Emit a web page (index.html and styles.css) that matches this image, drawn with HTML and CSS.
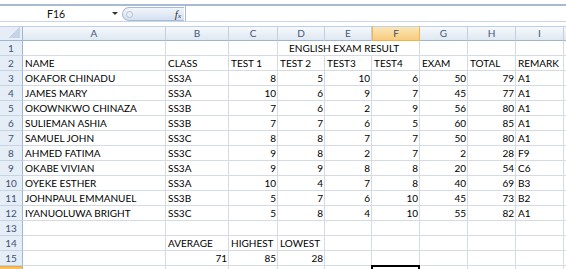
FILE: index.html
```html
<!DOCTYPE html>
<html>
<head>
<meta charset="utf-8">
<link rel="stylesheet" href="styles.css">
</head>
<body>
<div class="fbar">
  <div class="namebox"><span class="nb-text">F16</span><span class="nb-arrow"></span></div>
  <div class="fbtns"><span class="fb-circle"></span><span class="fx">f<span class="fx-sub">x</span></span></div>
  <div class="finput"></div>
</div>
<div class="gap"></div>
<div class="sheet">
  <div class="corner"></div><div class="ch">A</div><div class="ch">B</div><div class="ch">C</div><div class="ch">D</div><div class="ch">E</div><div class="ch ch-sel">F</div><div class="ch">G</div><div class="ch">H</div><div class="ch">I</div><div class="ch ch-last"></div>

  <div class="rh">1</div><div class="c"></div><div class="c"></div><div class="c"></div><div class="c span3 title">ENGLISH EXAM RESULT</div><div class="c"></div><div class="c"></div><div class="c"></div><div class="c"></div>

  <div class="rh">2</div><div class="c">NAME</div><div class="c">CLASS</div><div class="c">TEST 1</div><div class="c">TEST 2</div><div class="c">TEST3</div><div class="c">TEST4</div><div class="c">EXAM</div><div class="c">TOTAL</div><div class="c">REMARK</div><div class="c"></div>

  <div class="rh">3</div><div class="c">OKAFOR CHINADU</div><div class="c">SS3A</div><div class="c n">8</div><div class="c n">5</div><div class="c n">10</div><div class="c n">6</div><div class="c n">50</div><div class="c n">79</div><div class="c">A1</div><div class="c"></div>

  <div class="rh">4</div><div class="c">JAMES MARY</div><div class="c">SS3A</div><div class="c n">10</div><div class="c n">6</div><div class="c n">9</div><div class="c n">7</div><div class="c n">45</div><div class="c n">77</div><div class="c">A1</div><div class="c"></div>

  <div class="rh">5</div><div class="c">OKOWNKWO CHINAZA</div><div class="c">SS3B</div><div class="c n">7</div><div class="c n">6</div><div class="c n">2</div><div class="c n">9</div><div class="c n">56</div><div class="c n">80</div><div class="c">A1</div><div class="c"></div>

  <div class="rh">6</div><div class="c">SULIEMAN ASHIA</div><div class="c">SS3B</div><div class="c n">7</div><div class="c n">7</div><div class="c n">6</div><div class="c n">5</div><div class="c n">60</div><div class="c n">85</div><div class="c">A1</div><div class="c"></div>

  <div class="rh">7</div><div class="c">SAMUEL JOHN</div><div class="c">SS3C</div><div class="c n">8</div><div class="c n">8</div><div class="c n">7</div><div class="c n">7</div><div class="c n">50</div><div class="c n">80</div><div class="c">A1</div><div class="c"></div>

  <div class="rh">8</div><div class="c">AHMED FATIMA</div><div class="c">SS3C</div><div class="c n">9</div><div class="c n">8</div><div class="c n">2</div><div class="c n">7</div><div class="c n">2</div><div class="c n">28</div><div class="c">F9</div><div class="c"></div>

  <div class="rh">9</div><div class="c">OKABE VIVIAN</div><div class="c">SS3A</div><div class="c n">9</div><div class="c n">9</div><div class="c n">8</div><div class="c n">8</div><div class="c n">20</div><div class="c n">54</div><div class="c">C6</div><div class="c"></div>

  <div class="rh">10</div><div class="c">OYEKE ESTHER</div><div class="c">SS3A</div><div class="c n">10</div><div class="c n">4</div><div class="c n">7</div><div class="c n">8</div><div class="c n">40</div><div class="c n">69</div><div class="c">B3</div><div class="c"></div>

  <div class="rh">11</div><div class="c">JOHNPAUL EMMANUEL</div><div class="c">SS3B</div><div class="c n">5</div><div class="c n">7</div><div class="c n">6</div><div class="c n">10</div><div class="c n">45</div><div class="c n">73</div><div class="c">B2</div><div class="c"></div>

  <div class="rh">12</div><div class="c">IYANUOLUWA BRIGHT</div><div class="c">SS3C</div><div class="c n">5</div><div class="c n">8</div><div class="c n">4</div><div class="c n">10</div><div class="c n">55</div><div class="c n">82</div><div class="c">A1</div><div class="c"></div>

  <div class="rh">13</div><div class="c"></div><div class="c"></div><div class="c"></div><div class="c"></div><div class="c"></div><div class="c"></div><div class="c"></div><div class="c"></div><div class="c"></div><div class="c"></div>

  <div class="rh">14</div><div class="c"></div><div class="c">AVERAGE</div><div class="c">HIGHEST</div><div class="c">LOWEST</div><div class="c"></div><div class="c"></div><div class="c"></div><div class="c"></div><div class="c"></div><div class="c"></div>

  <div class="rh">15</div><div class="c"></div><div class="c n">71</div><div class="c n">85</div><div class="c n">28</div><div class="c"></div><div class="c"></div><div class="c"></div><div class="c"></div><div class="c"></div><div class="c"></div>

  <div class="rh rh-sel"></div><div class="c"></div><div class="c"></div><div class="c"></div><div class="c"></div><div class="c"></div><div class="c cell-sel"></div><div class="c"></div><div class="c"></div><div class="c"></div><div class="c"></div>
</div>
</body>
</html>
```
FILE: styles.css
```css
html, body {
  margin: 0;
  padding: 0;
}
body {
  width: 566px;
  height: 269px;
  overflow: hidden;
  background: #fff;
  font-family: Lato, "Liberation Sans", sans-serif;
  font-size: 10px;
  color: #000;
}

/* formula bar */
.fbar {
  margin-top: 4px;
  border-top: 2px solid #a9bbd4;
  border-bottom: 1px solid #c9d5e5;
  height: 15px;
  display: flex;
  align-items: stretch;
}
.namebox {
  width: 118px;
  display: flex;
  align-items: center;
  background: #fff;
}
.nb-text {
  width: 112px;
  text-align: center;
  color: #111;
  font-size: 10.5px;
}
.nb-arrow {
  width: 0;
  height: 0;
  border-left: 3px solid transparent;
  border-right: 3px solid transparent;
  border-top: 3px solid #333;
}
.fbtns {
  width: 55px;
  margin-left: 4px;
  margin-top: 1px;
  border: 1px solid #a8bbd5;
  border-right: none;
  border-radius: 8px 0 0 8px;
  background: linear-gradient(#f2f6fb, #d3e0f0);
  display: flex;
  align-items: center;
  justify-content: space-between;
  padding: 0 3px;
}
.fb-circle {
  width: 5px;
  height: 5px;
  border-radius: 50%;
  border: 1px solid #b5c1cf;
  background: #e9eef4;
}
.fx {
  font-family: "Liberation Serif", serif;
  font-style: italic;
  font-size: 11px;
  color: #333;
  line-height: 1;
}
.fx-sub {
  font-size: 7px;
}
.finput {
  flex: 1;
  border-left: 1px solid #a8bbd5;
  margin-left: 1px;
  background: #fff;
}
.gap {
  height: 4px;
  background: #fff;
}

/* sheet */
.sheet {
  display: grid;
  grid-template-columns: 23px 143px 63px 49px 47px 47px 48px 48px 48px 48px 1fr;
  grid-auto-rows: 15px;
}
.c {
  box-sizing: border-box;
  border-right: 1px solid #d5dbe4;
  border-bottom: 1px solid #d5dbe4;
  padding: 0 2px;
  line-height: 14px;
  white-space: nowrap;
  overflow: visible;
}
.n {
  text-align: right;
  padding-right: 1px;
}
.span3 {
  grid-column: span 3;
}
.title {
  padding-left: 11px;
}
.corner {
  box-sizing: border-box;
  border-right: 1px solid #9eb6ce;
  border-bottom: 1px solid #9eb6ce;
  border-top: 1px solid #c0cfe1;
  background:
    linear-gradient(to bottom right, transparent 50%, #c6d3e5 50%) right 2px bottom 2px / 11px 11px no-repeat,
    #e6edf6;
}
.ch {
  box-sizing: border-box;
  border-top: 1px solid #c0cfe1;
  border-right: 1px solid #c3d0e0;
  border-bottom: 1px solid #9eb6ce;
  background: linear-gradient(#f6f9fc, #dfe7f1);
  text-align: center;
  line-height: 13px;
  color: #44577a;
}
.ch-sel {
  background: linear-gradient(#fbe7b8, #f7cb7c);
  border-right-color: #f0b450;
  border-left: 1px solid #f0b450;
  border-bottom-color: #f2b24a;
  color: #3d4f6e;
}
.ch-last {
  border-right: none;
}
.rh {
  box-sizing: border-box;
  background: #e5edf7;
  border-right: 1px solid #9eb6ce;
  border-bottom: 1px solid #c7d4e6;
  text-align: center;
  line-height: 14px;
  color: #3f5272;
}
.rh-sel {
  background: linear-gradient(#f7bd5c, #fbe2a8);
  border-top: 1px solid #f0a93c;
}
.cell-sel {
  border-top: 2px solid #000;
  border-left: 2px solid #000;
  border-right: 2px solid #000;
  margin-left: -1px;
  margin-top: -1px;
}
```
